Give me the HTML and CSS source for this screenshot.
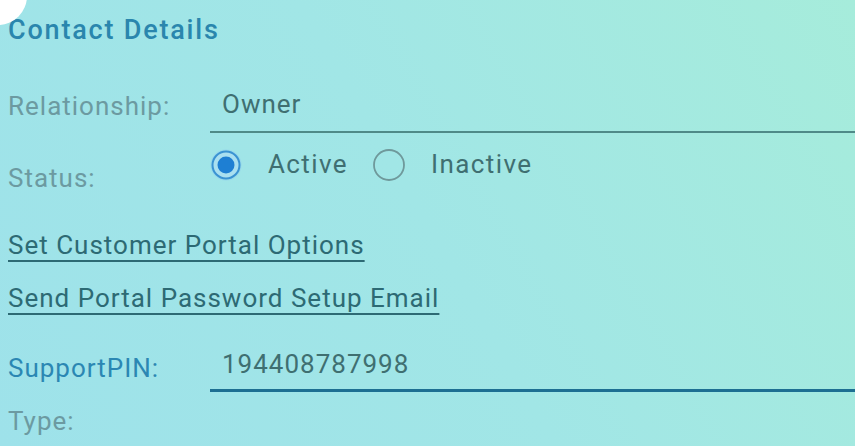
FILE: index.html
```html
<!DOCTYPE html>
<html lang="en">
<head>
<meta charset="utf-8">
<title>Contact Details</title>
<link rel="stylesheet" href="styles.css">
</head>
<body>
<div class="corner-dot"></div>
<main class="panel">
  <h2 class="title">Contact Details</h2>

  <div class="row row-relationship">
    <div class="label">Relationship:</div>
    <div class="value value-line">Owner</div>
  </div>

  <div class="row row-status">
    <div class="label label-status">Status:</div>
    <div class="radios">
      <span class="radio">
        <svg class="radio-icon" width="32" height="32" viewBox="0 0 32 32">
          <circle cx="16" cy="16" r="15.5" fill="#8fcdee" opacity="0.55"/>
          <circle cx="16" cy="16" r="13.5" fill="#a9dff0" stroke="#3a93d2" stroke-width="2"/>
          <circle cx="16" cy="16" r="8.5" fill="#1e7fd3"/>
        </svg>
        <span class="radio-text">Active</span>
      </span>
      <span class="radio">
        <svg class="radio-icon" width="32" height="32" viewBox="0 0 32 32">
          <circle cx="16" cy="16" r="15" fill="none" stroke="#6f999b" stroke-width="1.8"/>
        </svg>
        <span class="radio-text">Inactive</span>
      </span>
    </div>
  </div>

  <div class="link-row link-first"><a class="link" href="#">Set Customer Portal Options</a></div>
  <div class="link-row link-second"><a class="link" href="#">Send Portal Password Setup Email</a></div>

  <div class="row row-pin">
    <div class="label label-blue">SupportPIN:</div>
    <div class="value value-line-blue">194408787998</div>
  </div>

  <div class="row row-type">
    <div class="label">Type:</div>
  </div>
</main>
</body>
</html>
```

FILE: styles.css
```css
html, body {
  margin: 0;
  padding: 0;
  height: 100%;
}

body {
  width: 855px;
  height: 446px;
  overflow: hidden;
  position: relative;
  background: linear-gradient(60deg, #9ee2ea 0%, #a1e6e6 50%, #a6ecdb 100%);
  font-family: Roboto, "Liberation Sans", sans-serif;
  font-size: 26px;
  letter-spacing: 1px;
  line-height: 30px;
}

.corner-dot {
  position: absolute;
  left: -31px;
  top: -33px;
  width: 58px;
  height: 58px;
  border-radius: 50%;
  background: #ffffff;
}

.panel {
  padding-left: 8px;
}

.title {
  margin: 0;
  padding-top: 15px;
  font-size: 27px;
  line-height: 30px;
  font-weight: 500;
  letter-spacing: 1.8px;
  color: #2a86ad;
}

.row {
  display: grid;
  grid-template-columns: 202px 1fr;
  align-items: start;
}

.label {
  color: #6c9aa1;
}

.value {
  color: #3f6f71;
  padding-left: 12px;
}

.row-relationship {
  margin-top: 44px;
}

.row-relationship .label {
  margin-top: 2px;
}

.value-line {
  padding-bottom: 12px;
  border-bottom: 2px solid #4f8a88;
}

.row-status {
  margin-top: 16px;
}

.label-status {
  margin-top: 14px;
}

.radios {
  display: flex;
  align-items: center;
  gap: 25px;
  height: 30px;
}

.radio {
  display: flex;
  align-items: center;
  gap: 26px;
}

.radio-icon {
  display: block;
  flex: none;
  margin-top: 1px;
}

.radio-text {
  color: #3f6f71;
  letter-spacing: 1.4px;
}

.link-row {
  line-height: 30px;
}

.link-first {
  margin-top: 37px;
}

.link-second {
  margin-top: 23px;
}

.link {
  color: #2d6a74;
  text-decoration: underline;
  text-decoration-thickness: 2px;
  text-underline-offset: 6px;
}

.row-pin {
  margin-top: 36px;
}

.row-pin .label {
  margin-top: 4px;
}

.label-blue {
  color: #2b87b3;
}

.value-line-blue {
  padding-bottom: 10px;
  border-bottom: 3px solid #1d6f92;
}

.row-type {
  margin-top: 14px;
}
```
